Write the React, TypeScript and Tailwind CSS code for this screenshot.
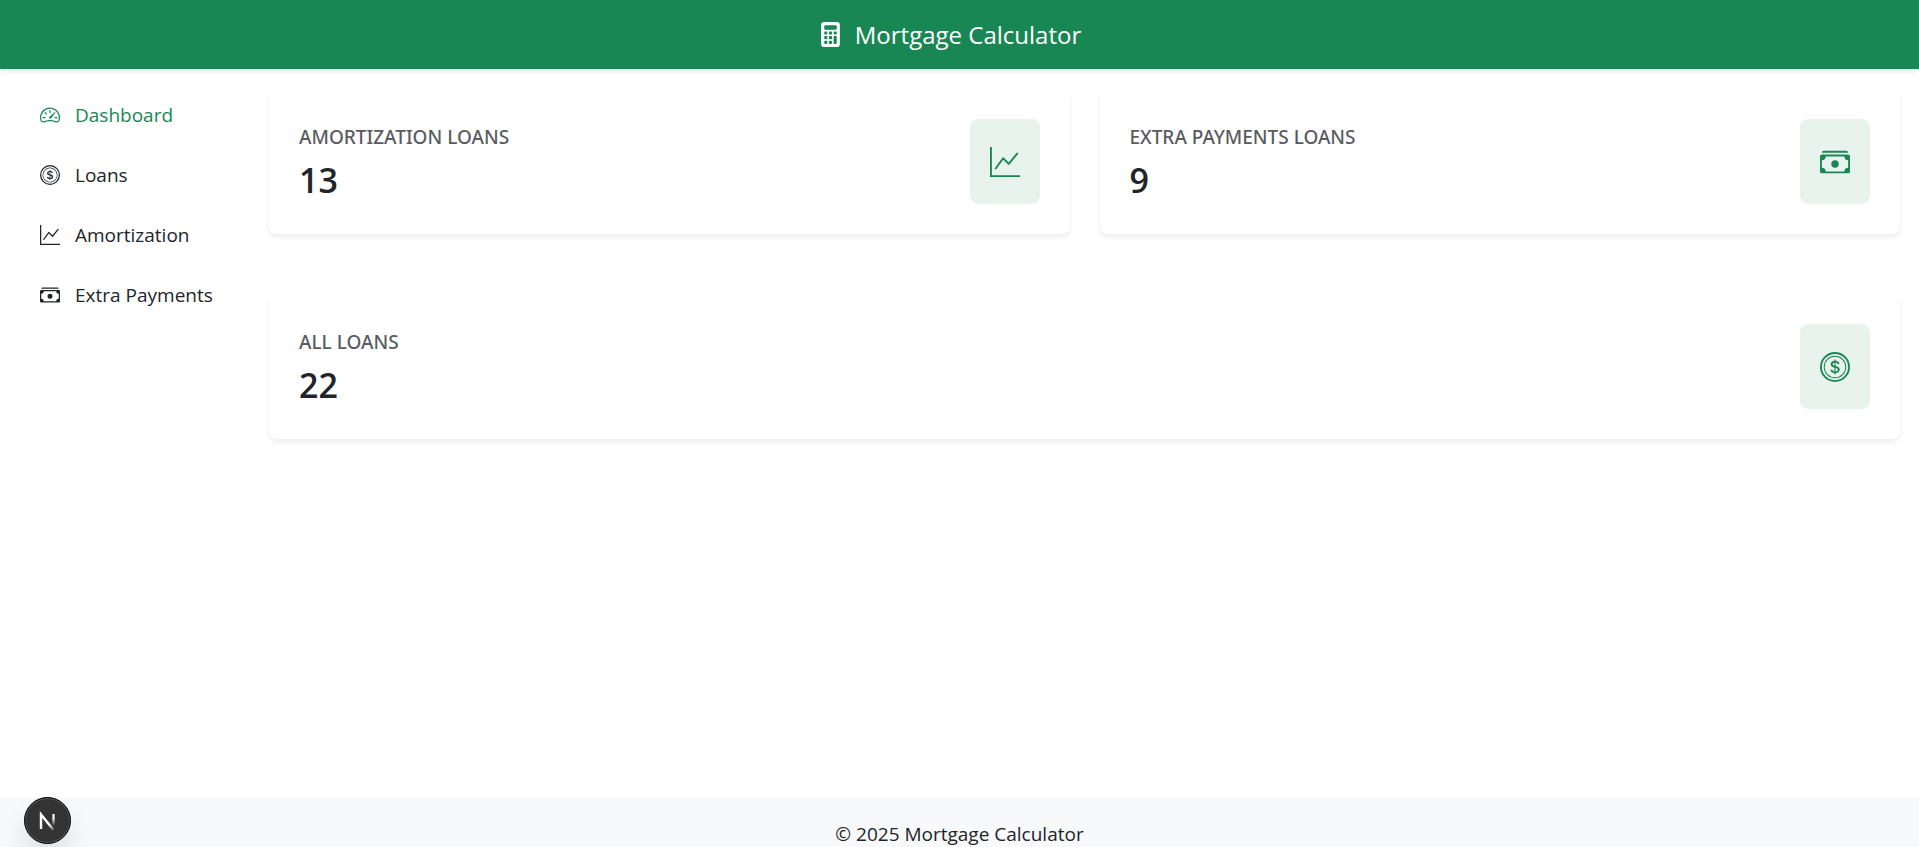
import type { IconType } from "react-icons";
import {
  BsCalculatorFill,
  BsCashStack,
  BsCoin,
  BsGraphUp,
  BsSpeedometer2,
} from "react-icons/bs";

const links: { label: string; icon: IconType; active?: boolean }[] = [
  { label: "Dashboard", icon: BsSpeedometer2, active: true },
  { label: "Loans", icon: BsCoin },
  { label: "Amortization", icon: BsGraphUp },
  { label: "Extra Payments", icon: BsCashStack },
];

const stats: { label: string; value: number; icon: IconType; wide?: boolean }[] = [
  { label: "Amortization Loans", value: 13, icon: BsGraphUp },
  { label: "Extra Payments Loans", value: 9, icon: BsCashStack },
  { label: "All Loans", value: 22, icon: BsCoin, wide: true },
];

function StatCard({ label, value, icon: Icon, wide }: (typeof stats)[number]) {
  return (
    <section
      className={`flex items-center justify-between rounded-lg bg-white p-[30px] shadow-[0_3px_5px_rgba(0,0,0,0.075)] ${
        wide ? "lg:col-span-2" : ""
      }`}
    >
      <div className="pt-0.5">
        <h2 className="font-['Noto_Sans',sans-serif] text-[19px] leading-6 font-medium text-[#595c5f] uppercase">
          {label}
        </h2>
        <p className="mt-[11px] text-[34px] leading-10 font-semibold">{value}</p>
      </div>
      <div className="flex h-[85px] w-[70px] items-center justify-center rounded-lg bg-[#e8f3ee] text-[30px] text-[#198754]">
        <Icon />
      </div>
    </section>
  );
}

export default function App() {
  return (
    <div className="flex min-h-screen flex-col bg-white font-['Segoe_UI','Open_Sans',sans-serif] text-[19px] text-[#212529]">
      <header className="flex h-[69px] items-center justify-center gap-3 bg-[#198754] pr-5 text-white shadow-[0_3px_5px_rgba(0,0,0,0.075)]">
        <BsCalculatorFill className="text-[25px]" />
        <h1 className="text-[24px] leading-8">Mortgage Calculator</h1>
      </header>

      <div className="flex grow">
        <nav className="w-[249px] shrink-0 px-10 pt-4" aria-label="Main">
          <ul>
            {links.map(({ label, icon: Icon, active }) => (
              <li key={label}>
                <a
                  href="#"
                  aria-current={active ? "page" : undefined}
                  className={`flex h-[60px] items-center gap-[15px] whitespace-nowrap ${active ? "text-[#198754]" : ""}`}
                >
                  <Icon className="shrink-0 text-[20px]" />
                  {label}
                </a>
              </li>
            ))}
          </ul>
        </nav>
        <main className="grow py-5 pr-[19px] pl-5">
          <div className="grid grid-cols-1 gap-x-[30px] gap-y-[60px] lg:grid-cols-2">
            {stats.map((stat) => (
              <StatCard key={stat.label} {...stat} />
            ))}
          </div>
        </main>
      </div>

      <footer className="bg-[#f8f9fa] pt-[23px] text-center leading-[26px]">
        © 2025 Mortgage Calculator
      </footer>

      <button
        type="button"
        aria-label="Open dev tools"
        className="fixed bottom-[3px] left-6 flex size-[47px] items-center justify-center rounded-full border border-black bg-[#333] shadow-[inset_0_0_0_1px_#555,0_16px_32px_-8px_rgba(0,0,0,0.24)]"
      >
        <svg width="20" height="20" viewBox="0 0 20 20" fill="none">
          <defs>
            <linearGradient id="stem" x1="0" y1="2" x2="0" y2="15" gradientUnits="userSpaceOnUse">
              <stop offset="0.4" stopColor="#fff" />
              <stop offset="1" stopColor="#fff" stopOpacity="0" />
            </linearGradient>
            <linearGradient id="diagonal" x1="9" y1="9" x2="17" y2="19" gradientUnits="userSpaceOnUse">
              <stop offset="0.4" stopColor="#fff" />
              <stop offset="1" stopColor="#fff" stopOpacity="0.1" />
            </linearGradient>
          </defs>
          <path d="M15.5 3v12" stroke="url(#stem)" strokeWidth="2.2" />
          <path d="M3 18V3.5L15.5 19" stroke="url(#diagonal)" strokeWidth="2.4" />
        </svg>
      </button>
    </div>
  );
}
